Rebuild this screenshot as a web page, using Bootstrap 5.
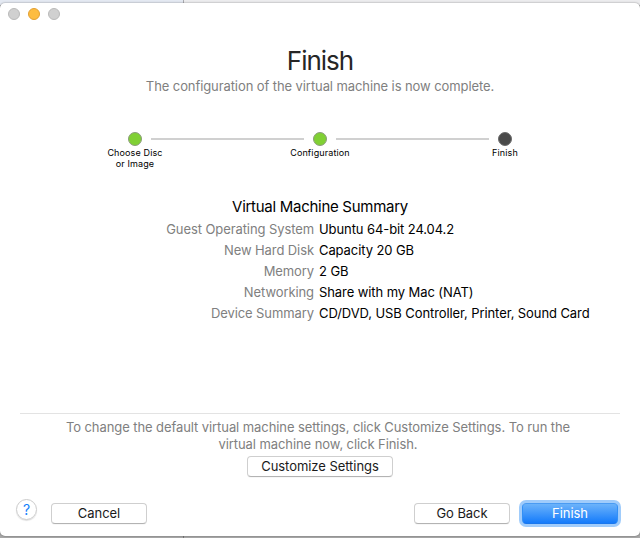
<!DOCTYPE html>
<html lang="en">
<head>
<meta charset="utf-8">
<meta name="viewport" content="width=device-width, initial-scale=1">
<title>Finish</title>
<link href="https://cdn.jsdelivr.net/npm/bootstrap@5.3.0/dist/css/bootstrap.min.css" rel="stylesheet">
<style>
body{width:640px;height:538px;overflow:hidden;padding-top:3px;font-family:Inter,"Liberation Sans",sans-serif;font-size:13px;line-height:17px;color:#000;
background:linear-gradient(90deg,transparent 183px,#aaabb0 183px,#aaabb0 184px,transparent 184px) 0 0/100% 3px no-repeat,
linear-gradient(90deg,#e4e9f2 184px,#ececee 184px) 0 0/100% 5px no-repeat,
linear-gradient(90deg,transparent 183px,#777 183px,#777 184px,transparent 184px) 0 536px/100% 2px no-repeat,#a8a8a8}
.sheet{height:533px;border-radius:5px;background:#fff;box-shadow:0 0 2px rgba(0,0,0,.45)}
.lights{height:41px;padding:5px 0 0 8px;gap:8px}
.light{width:12px;height:12px;border-radius:50%;background:#d0d0d0;border:1px solid #bababa}
.light-min{background:#fdbc40;border-color:#e3a032}
.title{font-size:26px;line-height:34px;letter-spacing:-1px;color:#262626}
.soft{color:#808080}
.sub{letter-spacing:-.09px}
.steps{margin-top:37px;padding:0 128px;height:65px}
.step{width:14px;font-size:9px;line-height:11px;letter-spacing:.13px}
.dot{width:14px;height:14px;margin-bottom:1px;border-radius:50%;background:#80d034;border:1px solid #8b9c7b}
.dot-now{background:#4a4a4a;border-color:#6c6c6c}
.link-line{height:2px;margin:6px 9px 0;background:#d0d0d0}
.summary-title{font-size:15px;line-height:20px;letter-spacing:-.28px}
.facts{display:grid;grid-template-columns:314px 1fr;column-gap:5px;line-height:21px;margin-top:2px;letter-spacing:-.09px}
.rule{height:1px;background:#e3e3e3;margin:89px 20px 0}
.note{padding:5px 62px 0 58px;height:42px;letter-spacing:-.08px}
.mac{--bs-btn-padding-y:0;--bs-btn-padding-x:0;--bs-btn-font-size:13px;--bs-btn-line-height:19px;--bs-btn-border-radius:4px;--bs-btn-color:#1a1a1a;--bs-btn-bg:#fff;width:96px;height:21px;letter-spacing:-.05px;border:1px solid #cfcfcf;border-bottom-color:#b3b3b3;box-shadow:0 1px 0 rgba(0,0,0,.03)}
.wide{width:146px}
.go{--bs-btn-color:#fff;background:linear-gradient(#6cb3fa,#147bfb);border-color:#4a9bf2 #3290f6 #1977ed;box-shadow:0 0 0 3px #a0ccfb}
.help{width:21px;height:21px;margin:-8px 14px 0 0;border-radius:50%;border:1px solid #cbcbcb;box-shadow:0 1px 1px rgba(0,0,0,.13);color:#147efb;font-size:14px;line-height:19px}
.foot{padding:26px 22px 0 16px}
</style>
<script src="https://cdn.jsdelivr.net/npm/bootstrap@5.3.0/dist/js/bootstrap.bundle.min.js"></script>
</head>
<body>
<main class="sheet">
<div class="lights d-flex"><span class="light"></span><span class="light light-min"></span><span class="light"></span></div>
<header class="text-center">
<h1 class="title fw-normal m-0">Finish</h1>
<p class="sub soft m-0">The configuration of the virtual machine is now complete.</p>
</header>
<div class="steps d-flex align-items-start text-center text-nowrap">
<div class="step d-flex flex-column align-items-center flex-shrink-0"><span class="dot"></span><span>Choose Disc<br>or Image</span></div>
<div class="link-line flex-fill"></div>
<div class="step d-flex flex-column align-items-center flex-shrink-0"><span class="dot"></span><span>Configuration</span></div>
<div class="link-line flex-fill"></div>
<div class="step d-flex flex-column align-items-center flex-shrink-0"><span class="dot dot-now"></span><span>Finish</span></div>
</div>
<section>
<h2 class="summary-title fw-normal text-center m-0">Virtual Machine Summary</h2>
<dl class="facts mb-0">
<dt class="soft fw-normal text-end">Guest Operating System</dt><dd class="m-0">Ubuntu 64-bit 24.04.2</dd>
<dt class="soft fw-normal text-end">New Hard Disk</dt><dd class="m-0">Capacity 20 GB</dd>
<dt class="soft fw-normal text-end">Memory</dt><dd class="m-0">2 GB</dd>
<dt class="soft fw-normal text-end">Networking</dt><dd class="m-0">Share with my Mac (NAT)</dd>
<dt class="soft fw-normal text-end">Device Summary</dt><dd class="m-0">CD/DVD, USB Controller, Printer, Sound Card</dd>
</dl>
</section>
<div class="rule"></div>
<p class="note soft text-center m-0">To change the default virtual machine settings, click Customize Settings. To run the<br>virtual machine now, click Finish.</p>
<div class="d-flex justify-content-center"><button class="btn mac wide">Customize Settings</button></div>
<footer class="foot d-flex align-items-center">
<button class="btn help p-0" aria-label="Help">?</button>
<button class="btn mac">Cancel</button>
<button class="btn mac ms-auto me-2">Go Back</button>
<button class="btn mac go ms-1">Finish</button>
</footer>
</main>
</body>
</html>
